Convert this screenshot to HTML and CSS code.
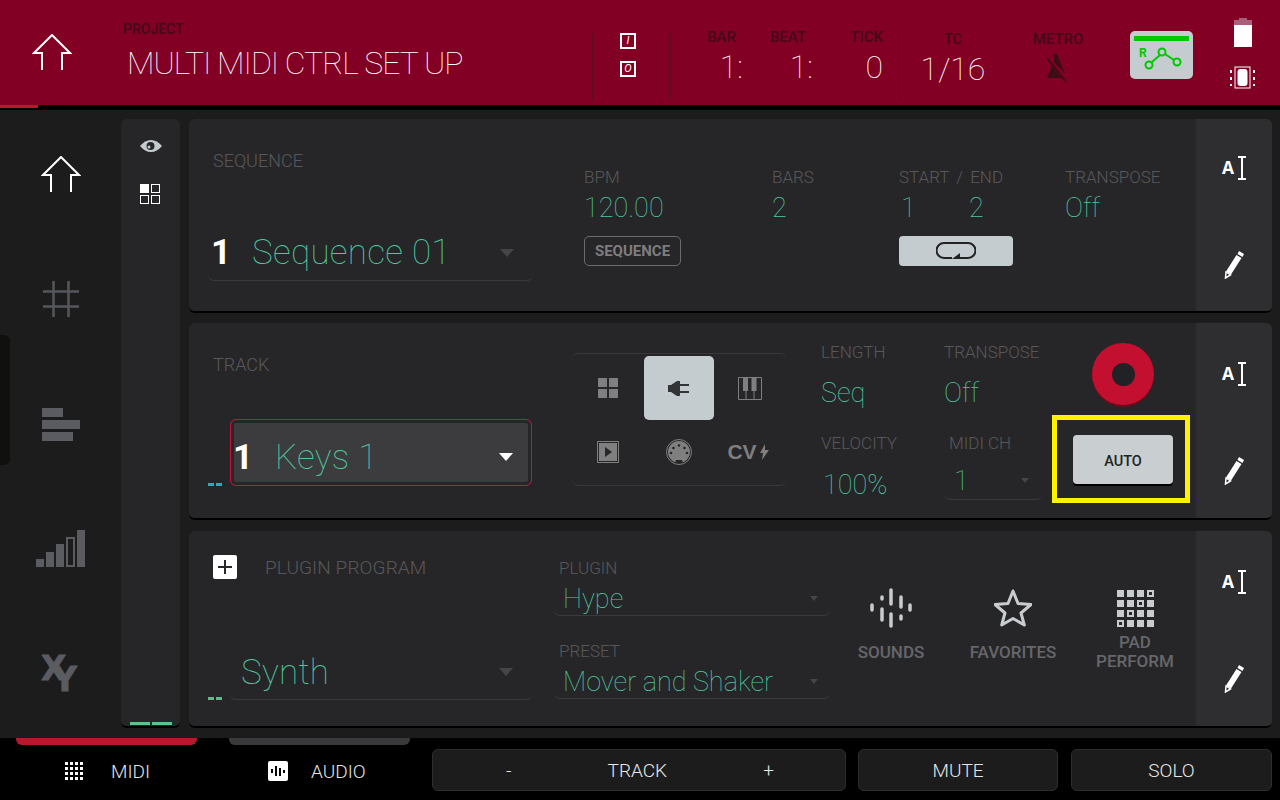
FILE: index.html
```html
<!DOCTYPE html>
<html>
<head>
    <title>Multi MIDI Ctrl Set Up</title>
    <link rel="stylesheet" href="styles.css">
</head>
<body>
    <div class="topbar">
        <div class="top-home">
            <svg width="40" height="37" viewBox="0 0 40 37"><path class="line-white" d="M10 36V19H2L20 1l18 18h-8v17"/></svg>
        </div>
        <div class="top-project">
            <div class="top-label">PROJECT</div>
            <div class="top-title">MULTI MIDI CTRL SET UP</div>
        </div>
        <div class="top-io">
            <span class="io-box">I</span>
            <span class="io-box">O</span>
        </div>
        <div class="top-counter">
            <div class="counter-cell counter-bar"><div class="top-label">BAR</div><div class="top-value">1:</div></div>
            <div class="counter-cell counter-beat"><div class="top-label">BEAT</div><div class="top-value">1:</div></div>
            <div class="counter-cell counter-tick"><div class="top-label">TICK</div><div class="top-value">0</div></div>
        </div>
        <div class="top-tc">
            <div class="top-label">TC</div>
            <div class="top-value">1/16</div>
        </div>
        <div class="top-metro">
            <div class="top-label">METRO</div>
            <svg width="24" height="30" viewBox="0 0 24 30"><g fill="#3a0d17"><path d="M8 1h3l8 20L8 9z"/><path d="M1 25l5-12 9 12z"/></g><path stroke="#3a0d17" stroke-width="2" d="M1 5l19 24"/></svg>
        </div>
        <div class="top-auto">
            <div class="auto-bar"></div>
            <svg width="55" height="30" viewBox="0 0 55 30"><text x="5" y="13" class="auto-r">R</text><g fill="none" stroke="#00c800" stroke-width="2"><circle cx="15" cy="21" r="3.500"/><circle cx="28" cy="8" r="3.500"/><circle cx="43" cy="18" r="3.500"/><path d="M18 18l8-7M31 10l9 6"/></g></svg>
        </div>
        <div class="top-power">
            <svg width="18" height="30" viewBox="0 0 18 30"><path fill="#a8607a" d="M5 0h8v2h5v7H0V2h5z"/><rect y="7" width="18" height="22" fill="#fff"/></svg>
            <svg width="26" height="24" viewBox="0 0 26 24"><rect x="5" y="1" width="15" height="21" fill="none" stroke="#fff"/><rect x="7.500" y="3" width="10" height="17" rx="3" fill="#fff"/><path stroke="#fff" stroke-width="2" stroke-dasharray="3 4" d="M1 4v16M24 4v16"/></svg>
        </div>
    </div>
    <div class="progress"><div class="progress-fill"></div></div>

    <div class="main">
        <div class="nav">
            <div class="nav-handle"></div>
            <div class="nav-item">
                <svg width="40" height="37" viewBox="0 0 40 37"><path class="line-white" d="M10 36V19H2L20 1l18 18h-8v17"/></svg>
            </div>
            <div class="nav-item">
                <svg width="36" height="36" viewBox="0 0 36 36"><path stroke="#55575c" stroke-width="2.500" d="M10.500 0v36M25.500 0v36M0 10.500h36M0 25.500h36"/></svg>
            </div>
            <div class="nav-item">
                <div class="bars-h">
                    <div class="bar-h bar-h-a"></div>
                    <div class="bar-h bar-h-b"></div>
                    <div class="bar-h bar-h-c"></div>
                </div>
            </div>
            <div class="nav-item">
                <svg width="50" height="38" viewBox="0 0 50 38"><g fill="#5a5c62"><rect x="0" y="29" width="8" height="8"/><rect x="10" y="22" width="8" height="15"/><rect x="20" y="14" width="8" height="23"/><rect x="41" y="0" width="8" height="37"/></g><rect x="31" y="8" width="7" height="28" fill="none" stroke="#5a5c62" stroke-width="2"/></svg>
            </div>
            <div class="nav-item">
                <svg width="50" height="52" viewBox="0 0 50 52"><text x="5" y="32" class="xy-text">X</text><text x="17" y="43" class="xy-text">Y</text></svg>
            </div>
        </div>

        <div class="strip">
            <svg class="strip-eye" width="22" height="12" viewBox="0 0 22 12"><path fill="#c4cbce" d="M0 6q5-6 11-6t11 6q-5 6-11 6T0 6z"/><circle cx="10.500" cy="6" r="4" fill="#26272a"/><circle cx="9" cy="7" r="1.500" fill="#c4cbce"/></svg>
            <div class="quad">
                <span class="quad-cell quad-on"></span><span class="quad-cell"></span>
                <span class="quad-cell"></span><span class="quad-cell"></span>
            </div>
            <div class="strip-meter"><span></span><span></span></div>
        </div>

        <div class="cards">
            <div class="card card-seq">
                <div class="card-body">
                    <div class="seq-left">
                        <div class="label label-big">SEQUENCE</div>
                        <div class="select select-seq">
                            <span class="num">1</span>
                            <span class="name">Sequence 01</span>
                            <span class="arrow arrow-dim"></span>
                        </div>
                    </div>
                    <div class="seq-col seq-bpm">
                        <div class="label">BPM</div>
                        <div class="value">120.00</div>
                        <div class="tag">SEQUENCE</div>
                    </div>
                    <div class="seq-col seq-bars">
                        <div class="label">BARS</div>
                        <div class="value">2</div>
                    </div>
                    <div class="seq-col seq-range">
                        <div class="label label-range">START / END</div>
                        <div class="value range-values"><span class="range-start">1</span><span>2</span></div>
                        <div class="loop-btn">
                            <svg width="40" height="20" viewBox="0 0 40 20"><path fill="none" stroke="#222" stroke-width="2" d="M16 17H8a7 7 0 0 1 0-15h24a7 7 0 0 1 0 15H21"/><path fill="#222" d="M16 18l8-6v6z"/></svg>
                        </div>
                    </div>
                    <div class="seq-col">
                        <div class="label">TRANSPOSE</div>
                        <div class="value">Off</div>
                    </div>
                </div>
                <div class="card-side">
                    <div class="side-text"><span class="side-a">A</span><svg width="8" height="24" viewBox="0 0 8 24"><path class="line-white" d="M0 1h8M0 23h8M4 1v22"/></svg></div>
                    <svg width="20" height="28" viewBox="0 0 20 28"><path fill="#fff" d="M15 0l5 3-1.500 3-5-3zM12.500 4l5 3L7 23.500l-5-3z"/><path fill="none" stroke="#fff" stroke-width="1.500" d="M2 21l4.500 3-5 3z"/></svg>
                </div>
            </div>

            <div class="card card-track">
                <div class="card-body">
                    <div class="track-left">
                        <div class="label label-big">TRACK</div>
                        <div class="select-row track-row">
                            <div class="dash dash-blue"><span></span><span></span></div>
                            <div class="select-focus">
                                <span class="num">1</span>
                                <span class="name">Keys 1</span>
                                <span class="arrow"></span>
                            </div>
                        </div>
                    </div>
                    <div class="modes">
                        <div class="mode">
                            <svg width="20" height="20" viewBox="0 0 20 20"><path fill="#7f7f80" d="M0 0h9v9H0zM11 0h9v9h-9zM0 11h9v9H0zM11 11h9v9h-9z"/></svg>
                        </div>
                        <div class="mode mode-on">
                            <svg width="22" height="15" viewBox="0 0 22 15"><path fill="#333436" d="M0 4h3l6-4h3v15H9L3 11H0zM12 3h9v2h-9zM12 10h9v2h-9z"/></svg>
                        </div>
                        <div class="mode">
                            <svg width="24" height="23" viewBox="0 0 24 23"><path fill="none" stroke="#7f7f80" d="M.5.5h23v22H.5zM8 13v9.500M16 13v9.500"/><path fill="#7f7f80" d="M5 1h5v13H5zM13.500 1h5v13h-5z"/></svg>
                        </div>
                        <div class="mode">
                            <svg width="22" height="22" viewBox="0 0 22 22"><path fill="none" stroke="#7f7f80" d="M.5.500h21v21H.5z"/><rect x="2" y="2" width="18" height="18" fill="#7f7f80"/><path fill="#262628" d="M8 6l7 5-7 5z"/></svg>
                        </div>
                        <div class="mode">
                            <svg width="26" height="26" viewBox="0 0 26 26"><circle cx="13" cy="13" r="12.500" fill="none" stroke="#7f7f80"/><circle cx="13" cy="13" r="11" fill="#7f7f80"/><path fill="#262628" d="M9 24l1-3h6l1 3z"/><g fill="#262628"><circle cx="5" cy="14" r="1.300"/><circle cx="7.500" cy="9" r="1.300"/><circle cx="13" cy="6.500" r="1.300"/><circle cx="18.500" cy="9" r="1.300"/><circle cx="21" cy="14" r="1.300"/></g></svg>
                        </div>
                        <div class="mode mode-cv">
                            <span class="cv-text">CV</span>
                            <svg width="9" height="16" viewBox="0 0 9 16"><path fill="#7f7f80" d="M5 0L0 9h3l-1 7 7-10H5z"/></svg>
                        </div>
                    </div>
                    <div class="track-col track-len">
                        <div class="label">LENGTH</div>
                        <div class="value value-tall">Seq</div>
                        <div class="label label-lower">VELOCITY</div>
                        <div class="value value-tall value-nudge">100%</div>
                    </div>
                    <div class="track-col track-trans">
                        <div class="label">TRANSPOSE</div>
                        <div class="value value-tall">Off</div>
                        <div class="label label-lower label-midi">MIDI CH</div>
                        <div class="midi-select">
                            <span class="value">1</span>
                            <span class="arrow arrow-small arrow-dim"></span>
                        </div>
                    </div>
                    <div class="track-rec">
                        <div class="rec-btn"><div class="rec-hole"></div></div>
                        <div class="highlight">
                            <div class="auto-btn">AUTO</div>
                        </div>
                    </div>
                </div>
                <div class="card-side card-side-low">
                    <div class="side-text"><span class="side-a">A</span><svg width="8" height="24" viewBox="0 0 8 24"><path class="line-white" d="M0 1h8M0 23h8M4 1v22"/></svg></div>
                    <svg width="20" height="28" viewBox="0 0 20 28"><path fill="#fff" d="M15 0l5 3-1.500 3-5-3zM12.500 4l5 3L7 23.500l-5-3z"/><path fill="none" stroke="#fff" stroke-width="1.500" d="M2 21l4.500 3-5 3z"/></svg>
                </div>
            </div>

            <div class="card card-plugin">
                <div class="card-body">
                    <div class="plugin-left">
                        <div class="plugin-head">
                            <div class="plus-btn">
                                <svg width="14" height="14" viewBox="0 0 14 14"><path stroke="#26272a" stroke-width="2" d="M7 0v14M0 7h14"/></svg>
                            </div>
                            <div class="label label-program">PLUGIN PROGRAM</div>
                        </div>
                        <div class="select-row plugin-row">
                            <div class="dash dash-green"><span></span><span></span></div>
                            <div class="select select-synth">
                                <span class="name">Synth</span>
                                <span class="arrow arrow-dim"></span>
                            </div>
                        </div>
                    </div>
                    <div class="plugin-mid">
                        <div class="label">PLUGIN</div>
                        <div class="mini-select"><span class="value">Hype</span><span class="arrow arrow-small arrow-dim"></span></div>
                        <div class="label label-preset">PRESET</div>
                        <div class="mini-select"><span class="value">Mover and Shaker</span><span class="arrow arrow-small arrow-dim"></span></div>
                    </div>
                    <div class="tile">
                        <div class="tile-icon">
                            <svg width="42" height="40" viewBox="0 0 42 40"><path stroke="#c9cccf" stroke-width="3.500" stroke-linecap="round" d="M2 17v5M12 9v2M12 21v11M21 2v14M21 26v12M31 9v10M31 28v3M40 17v5"/></svg>
                        </div>
                        <div class="tile-label">SOUNDS</div>
                    </div>
                    <div class="tile">
                        <div class="tile-icon">
                            <svg width="38" height="38" viewBox="0 0 38 38"><path fill="none" stroke="#c9cccf" stroke-width="3" stroke-linejoin="round" d="M19 2l5 12.500 13 1-10 8.500 3.300 12L19 29.500 7.700 36 11 24 1 15.500l13-1z"/></svg>
                        </div>
                        <div class="tile-label">FAVORITES</div>
                    </div>
                    <div class="tile">
                        <div class="tile-icon">
                            <div class="pad-grid">
                                <span></span><span></span><span></span><span class="pad-off"></span>
                                <span></span><span></span><span class="pad-off"></span><span></span>
                                <span></span><span class="pad-off"></span><span></span><span></span>
                                <span class="pad-off"></span><span></span><span></span><span></span>
                            </div>
                        </div>
                        <div class="tile-label tile-label-two">PAD<br>PERFORM</div>
                    </div>
                </div>
                <div class="card-side card-side-low">
                    <div class="side-text"><span class="side-a">A</span><svg width="8" height="24" viewBox="0 0 8 24"><path class="line-white" d="M0 1h8M0 23h8M4 1v22"/></svg></div>
                    <svg width="20" height="28" viewBox="0 0 20 28"><path fill="#fff" d="M15 0l5 3-1.500 3-5-3zM12.500 4l5 3L7 23.500l-5-3z"/><path fill="none" stroke="#fff" stroke-width="1.500" d="M2 21l4.500 3-5 3z"/></svg>
                </div>
            </div>
        </div>
    </div>

    <div class="footer">
        <div class="tab tab-on">
            <div class="tab-line"></div>
            <div class="tab-content tab-midi">
                <div class="dots"><span></span><span></span><span></span><span></span><span></span><span></span><span></span><span></span><span></span><span></span><span></span><span></span><span></span><span></span><span></span><span></span></div>
                <span>MIDI</span>
            </div>
        </div>
        <div class="tab">
            <div class="tab-line"></div>
            <div class="tab-content tab-audio">
                <svg width="20" height="20" viewBox="0 0 20 20"><rect width="20" height="20" rx="2" fill="#fff"/><path stroke="#000" stroke-width="2" d="M4 8v4M8 5v10M12 7v8M16 9v3"/></svg>
                <span>AUDIO</span>
            </div>
        </div>
        <div class="btn btn-track"><span>-</span><span>TRACK</span><span>+</span></div>
        <div class="btn btn-mute">MUTE</div>
        <div class="btn btn-solo">SOLO</div>
    </div>
</body>
</html>
```

FILE: styles.css
```css
* {
    margin: 0;
    padding: 0;
    box-sizing: border-box;
    font-family: Roboto, 'Liberation Sans', sans-serif;
}

body {
    width: 1280px;
    height: 800px;
    overflow: hidden;
    background: #1c1c1d;
}

.line-white {
    fill: none;
    stroke: #fff;
    stroke-width: 2;
}

/* top bar */
.topbar {
    display: flex;
    height: 105px;
    background: #820024;
}

.top-home {
    width: 123px;
    padding: 34px 0 0 32px;
}

.top-project {
    width: 469px;
    padding-top: 19px;
}

.top-label {
    color: #440a18;
    font-size: 14px;
    font-weight: 500;
    line-height: 20px;
}

.top-title {
    color: #fff;
    font-size: 32px;
    font-weight: 100;
    line-height: 44px;
    margin: 2px 0 0 4px;
    letter-spacing: -1px;
}

.top-value {
    color: #fff;
    font-size: 32px;
    font-weight: 100;
    line-height: 40px;
}

.top-io {
    width: 79px;
    height: 67px;
    margin-top: 33px;
    border-left: 1px solid #5e0a20;
    border-right: 1px solid #5e0a20;
    display: flex;
    flex-direction: column;
    align-items: center;
    padding: 0 7px 0 0;
    gap: 12px;
}

.io-box {
    width: 16px;
    height: 16px;
    border: 2px solid #fff;
    color: #fff;
    font-size: 11px;
    font-style: italic;
    line-height: 12px;
    text-align: center;
}

.top-counter {
    width: 229px;
    height: 67px;
    margin-top: 33px;
    border-right: 1px solid #5e0a20;
    display: flex;
}

.counter-cell {
    text-align: right;
    margin-top: -6px;
}

.counter-cell .top-label { font-size: 15px; }

.counter-bar { width: 72px; }
.counter-beat { width: 70px; }
.counter-tick { width: 70px; }

.counter-bar .top-label { margin-right: 7px; }
.counter-beat .top-label { margin-right: 7px; }

.top-tc {
    width: 100px;
    padding-top: 29px;
    text-align: center;
    margin-left: 3px;
}

.top-metro {
    width: 72px;
    padding-top: 29px;
    display: flex;
    flex-direction: column;
    align-items: center;
    gap: 4px;
    margin-left: 19px;
}

.top-metro .top-label { font-size: 15px; }

.top-auto {
    width: 63px;
    height: 48px;
    margin: 31px 0 0 36px;
    background: #c5cccf;
    border-radius: 5px;
    padding: 5px 4px 0;
}

.auto-bar {
    height: 5px;
    background: #00c800;
    margin-bottom: 3px;
}

.auto-r {
    fill: #00c800;
    font-size: 12px;
    font-weight: 700;
}

.top-power {
    display: flex;
    flex-direction: column;
    align-items: center;
    width: 26px;
    margin-left: 37px;
    padding-top: 18px;
    gap: 18px;
}

.progress {
    height: 5px;
    background: #000;
}

.progress-fill {
    width: 38px;
    height: 3px;
    background: #b8182c;
}

/* main area */
.main {
    display: flex;
    height: 628px;
    padding-top: 9px;
}

.nav {
    width: 121px;
    padding-top: 25px;
    display: flex;
    flex-direction: column;
    align-items: center;
    gap: 65px;
    position: relative;
}

.nav-item {
    height: 60px;
    display: flex;
    align-items: center;
    justify-content: center;
}

.nav-handle {
    position: absolute;
    left: 0;
    top: 216px;
    width: 10px;
    height: 130px;
    background: #10100f;
    border-radius: 0 6px 6px 0;
}

.bars-h {
    display: flex;
    flex-direction: column;
    gap: 3px;
    width: 38px;
}

.bar-h {
    height: 9px;
    background: #5a5c62;
}

.bar-h-a { width: 21px; }
.bar-h-b { width: 38px; }
.bar-h-c { width: 31px; }

.xy-text {
    fill: #5a5c62;
    stroke: #5a5c62;
    stroke-width: 0.8;
    font-family: 'DejaVu Sans', sans-serif;
    font-size: 33px;
    font-weight: 700;
}

.strip {
    width: 59px;
    height: 609px;
    background: #262628;
    border-bottom: 2px solid #000;
    border-radius: 6px;
    display: flex;
    flex-direction: column;
    align-items: center;
    padding-top: 21px;
}

.quad {
    display: grid;
    grid-template-columns: 9px 9px;
    grid-auto-rows: 9px;
    gap: 2px;
    margin: 32px 1px 0 0;
}

.quad-cell {
    border: 1px solid #fff;
}

.quad-on {
    background: #fff;
}

.strip-meter {
    margin-top: auto;
    display: flex;
    gap: 2px;
    margin-bottom: 1px;
}

.strip-meter span {
    width: 20px;
    height: 3px;
    background: #5ac58e;
}

.cards {
    width: 1083px;
    margin-left: 9px;
    display: flex;
    flex-direction: column;
}

.card {
    display: flex;
    background: #262628;
    border-bottom: 2px solid #000;
    border-radius: 6px;
    overflow: hidden;
}

.card-seq { height: 194px; }
.card-track { height: 197px; margin-top: 10px; }
.card-plugin { height: 197px; margin-top: 11px; }

.card-body {
    flex: 1;
    display: flex;
}

.card-side {
    width: 76px;
    background: #2e2e30;
    display: flex;
    flex-direction: column;
    align-items: center;
    padding-top: 37px;
    gap: 71px;
}

.card-side-low { padding-top: 39px; }

.side-text {
    display: flex;
    align-items: center;
    gap: 4px;
    height: 24px;
}

.side-a {
    color: #fff;
    font-family: 'Liberation Mono', monospace;
    font-size: 20px;
    font-weight: 700;
}

/* shared fields */
.label {
    color: #58585a;
    font-size: 17px;
    font-weight: 300;
    line-height: 20px;
    white-space: nowrap;
}

.label-big {
    font-size: 18px;
    line-height: 21px;
}

.label-program {
    font-size: 19px;
    letter-spacing: 0.1px;
    padding-top: 2px;
}

.label-range { word-spacing: 3px; }

.value {
    color: #4fc8a0;
    font-size: 27px;
    font-weight: 100;
    line-height: 42px;
    white-space: nowrap;
}

.value-tall { line-height: 44px; margin-top: 9px; }
.value-nudge { padding-left: 2px; margin-top: 10px; }

.num {
    color: #fff;
    font-size: 35px;
    font-weight: 700;
}

.name {
    color: #4fc8a0;
    font-size: 35px;
    font-weight: 100;
    letter-spacing: 0.3px;
}

.arrow {
    width: 0;
    height: 0;
    border-left: 7px solid transparent;
    border-right: 7px solid transparent;
    border-top: 8px solid #fff;
    margin-left: auto;
}

.arrow-dim { border-top-color: #454547; }

.arrow-small {
    border-left-width: 4px;
    border-right-width: 4px;
    border-top-width: 5px;
}

.select {
    display: flex;
    align-items: center;
    border-bottom: 1px solid #3a3a3c;
    border-radius: 0 0 6px 6px;
}

.select-row {
    display: flex;
    align-items: flex-end;
    gap: 8px;
    margin-left: -5px;
}

.dash {
    display: flex;
    gap: 2px;
}

.dash span {
    width: 6px;
    height: 3px;
}

.dash-blue span { background: #2ea8c4; }
.dash-green span { background: #58bd88; }

/* sequence card */
.seq-left {
    width: 395px;
    padding: 31px 0 0 24px;
}

.select-seq {
    width: 325px;
    height: 56px;
    margin: 54px 0 0 -5px;
    padding: 0 19px 0 3px;
}

.select-seq .num { width: 41px; }

.seq-col { padding-top: 48px; }
.seq-bpm { width: 188px; }
.seq-bars { width: 127px; }
.seq-range { width: 166px; }

.range-values {
    display: flex;
    padding-left: 2px;
}

.range-start { width: 68px; }

.tag {
    width: 97px;
    height: 30px;
    margin-top: 7px;
    border: 1px solid #6b6b6d;
    border-radius: 5px;
    color: #7d7d7f;
    font-size: 15px;
    font-weight: 700;
    line-height: 28px;
    text-align: center;
}

.loop-btn {
    width: 114px;
    height: 30px;
    margin-top: 7px;
    background: #c5cccf;
    border-radius: 4px;
    display: flex;
    align-items: center;
    justify-content: center;
}

/* track card */
.track-left {
    width: 383px;
    padding: 31px 0 0 24px;
}

.track-row { margin-top: 44px; }

.select-focus {
    width: 302px;
    height: 67px;
    border: 1px solid #c8143c;
    border-radius: 6px;
    box-shadow: inset 0 0 0 3px #262628;
    background: #3c3c3e;
    display: flex;
    align-items: center;
    padding: 9px 18px 0 2px;
}

.select-focus .num { width: 42px; }

.modes {
    width: 214px;
    height: 133px;
    margin-top: 30px;
    padding-top: 2px;
    border-top: 1px solid #38383a;
    border-bottom: 1px solid #38383a;
    border-radius: 6px;
    display: grid;
    grid-template-columns: 72px 70px 72px;
    grid-auto-rows: 64px;
}

.mode {
    display: flex;
    align-items: center;
    justify-content: center;
    gap: 3px;
}

.mode-on {
    background: #c5cccf;
    border-radius: 5px;
}

.mode-cv { padding-right: 4px; }

.cv-text {
    color: #7f7f80;
    font-family: 'Liberation Sans', sans-serif;
    font-size: 21px;
    font-weight: 700;
}

.track-col { padding-top: 19px; }
.track-len { width: 123px; margin-left: 35px; }
.track-trans { width: 108px; }

.label-lower { margin-top: 18px; }
.label-midi { padding-left: 5px; }

.midi-select {
    display: flex;
    align-items: center;
    height: 38px;
    width: 98px;
    margin-top: 9px;
    padding: 0 13px 0 10px;
    border-bottom: 1px solid #3a3a3c;
    border-radius: 0 0 6px 6px;
}

.track-rec { width: 138px; }

.rec-btn {
    width: 62px;
    height: 62px;
    margin: 20px 0 0 40px;
    background: #c30f30;
    border-radius: 50%;
    box-shadow: 0 2px 0 #6d0a1c;
    display: flex;
    align-items: center;
    justify-content: center;
}

.rec-hole {
    width: 23px;
    height: 23px;
    background: #212226;
    border-radius: 50%;
}

.highlight {
    width: 138px;
    height: 88px;
    margin-top: 10px;
    border: 5px solid #fff200;
    padding: 15px 0 0 16px;
}

.auto-btn {
    width: 100px;
    height: 49px;
    background: #c9ced1;
    border-radius: 4px;
    box-shadow: 0 2px 0 #000;
    color: #222;
    font-size: 14.500px;
    font-weight: 500;
    line-height: 53px;
    text-align: center;
}

/* plugin card */
.plugin-left {
    width: 365px;
    padding: 24px 0 0 24px;
}

.plugin-head {
    display: flex;
    align-items: center;
    gap: 28px;
}

.plus-btn {
    width: 24px;
    height: 24px;
    background: #fff;
    border-radius: 2px;
    display: flex;
    align-items: center;
    justify-content: center;
}

.plugin-row { margin-top: 64px; }

.select-synth {
    width: 302px;
    height: 57px;
    padding: 2px 19px 0 11px;
}

.plugin-mid {
    width: 276px;
    padding-top: 27px;
}

.plugin-mid .label { padding-left: 5px; }
.plugin-mid .label-preset { margin-top: 25px; }

.mini-select {
    display: flex;
    align-items: center;
    height: 38px;
    padding: 4px 12px 0 9px;
    border-bottom: 1px solid #3a3a3c;
    border-radius: 0 0 6px 6px;
}

.tile {
    width: 122px;
    padding-top: 57px;
    display: flex;
    flex-direction: column;
    align-items: center;
}

.tile-icon {
    height: 40px;
    display: flex;
    align-items: center;
}

.tile-label {
    margin-top: 15px;
    color: #66676a;
    font-size: 17px;
    font-weight: 500;
    line-height: 19px;
    text-align: center;
}

.tile-label-two { margin-top: 5px; }

.pad-grid {
    display: grid;
    grid-template-columns: repeat(4, 7px);
    grid-auto-rows: 7px;
    gap: 3px;
}

.pad-grid span {
    background: #c9cccf;
}

.pad-grid .pad-off {
    background: none;
    border: 2px solid #c9cccf;
}

/* footer */
.footer {
    display: flex;
    height: 62px;
    background: #000;
    padding-left: 16px;
}

.tab {
    width: 181px;
    margin-right: 32px;
}

.tab-line {
    height: 7px;
    background: #3a3a3c;
    border-radius: 0 0 6px 6px;
}

.tab-on .tab-line { background: #b8182c; }

.tab-content {
    display: flex;
    align-items: center;
    height: 50px;
    margin-top: 1px;
    color: #e4e4e4;
    font-size: 19px;
    font-weight: 300;
}

.tab-midi { padding-left: 49px; gap: 28px; }
.tab-audio { padding-left: 39px; gap: 23px; }

.dots {
    display: grid;
    grid-template-columns: repeat(4, 3px);
    grid-auto-rows: 3px;
    gap: 2px;
}

.dots span { background: #fff; }

.tab + .tab { margin-right: 22px; }

.btn {
    height: 42px;
    margin-top: 11px;
    background: #1c1c1d;
    border: 1px solid #2e2e30;
    border-radius: 6px;
    color: #e8e8e8;
    font-size: 19px;
    font-weight: 300;
    display: flex;
    align-items: center;
    justify-content: center;
}

.btn-track {
    width: 414px;
    justify-content: space-between;
    padding: 0 71px 0 73px;
}

.btn-mute { width: 200px; margin-left: 12px; }
.btn-solo { width: 201px; margin-left: 13px; }
```
